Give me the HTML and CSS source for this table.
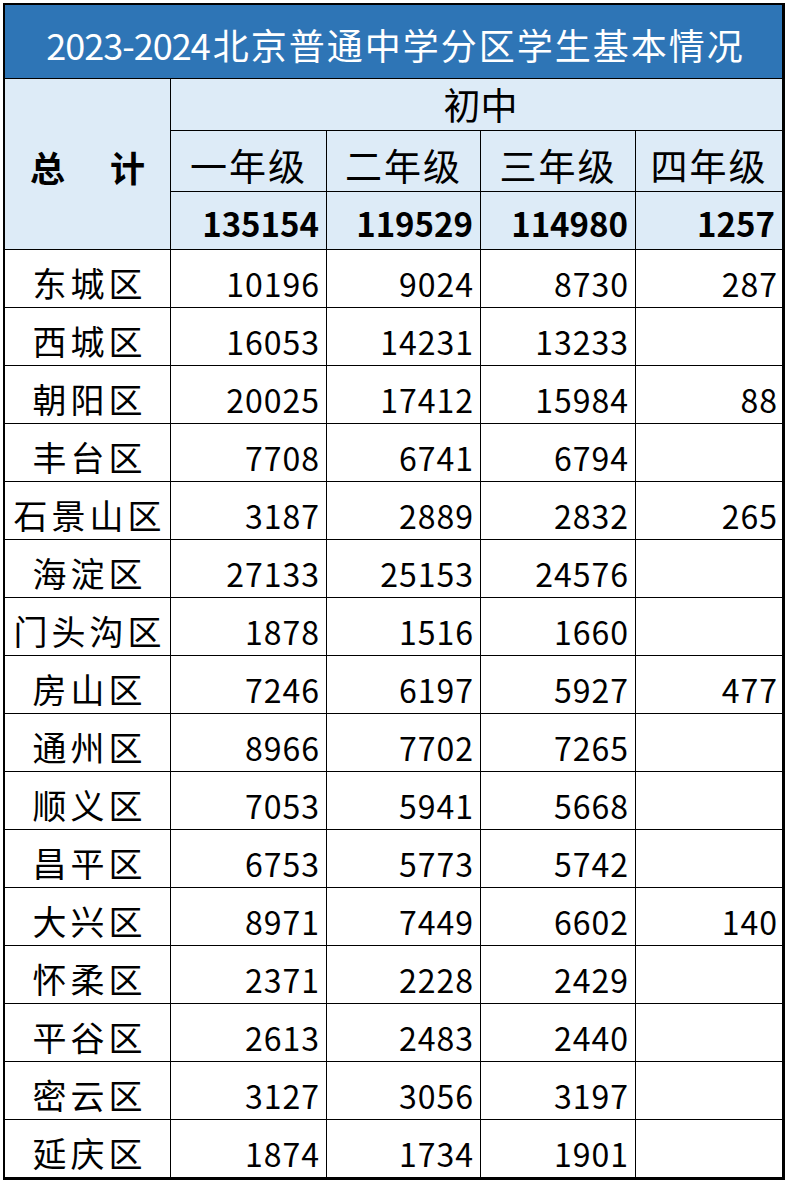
FILE: index.html
```html
<!DOCTYPE html>
<html lang="zh">
<head>
<meta charset="utf-8">
<title>2023-2024北京普通中学分区学生基本情况</title>
<link rel="stylesheet" href="styles.css">
</head>
<body>
<div class="sheet">
  <div class="title"><span class="yr">2023-2024</span><span class="tx">北京普通中学分区学生基本情况</span></div>
  <div class="hd total-label"><span>总</span><span>计</span></div>
  <div class="hd group">初中</div>
  <div class="hd grade">一年级</div>
  <div class="hd grade">二年级</div>
  <div class="hd grade">三年级</div>
  <div class="hd grade">四年级</div>
  <div class="hd sum">135154</div>
  <div class="hd sum">119529</div>
  <div class="hd sum">114980</div>
  <div class="hd sum">1257</div>

  <div class="name">东城区</div><div class="num">10196</div><div class="num">9024</div><div class="num">8730</div><div class="num last">287</div>
  <div class="name">西城区</div><div class="num">16053</div><div class="num">14231</div><div class="num">13233</div><div class="num last"></div>
  <div class="name">朝阳区</div><div class="num">20025</div><div class="num">17412</div><div class="num">15984</div><div class="num last">88</div>
  <div class="name">丰台区</div><div class="num">7708</div><div class="num">6741</div><div class="num">6794</div><div class="num last"></div>
  <div class="name">石景山区</div><div class="num">3187</div><div class="num">2889</div><div class="num">2832</div><div class="num last">265</div>
  <div class="name">海淀区</div><div class="num">27133</div><div class="num">25153</div><div class="num">24576</div><div class="num last"></div>
  <div class="name">门头沟区</div><div class="num">1878</div><div class="num">1516</div><div class="num">1660</div><div class="num last"></div>
  <div class="name">房山区</div><div class="num">7246</div><div class="num">6197</div><div class="num">5927</div><div class="num last">477</div>
  <div class="name">通州区</div><div class="num">8966</div><div class="num">7702</div><div class="num">7265</div><div class="num last"></div>
  <div class="name">顺义区</div><div class="num">7053</div><div class="num">5941</div><div class="num">5668</div><div class="num last"></div>
  <div class="name">昌平区</div><div class="num">6753</div><div class="num">5773</div><div class="num">5742</div><div class="num last"></div>
  <div class="name">大兴区</div><div class="num">8971</div><div class="num">7449</div><div class="num">6602</div><div class="num last">140</div>
  <div class="name">怀柔区</div><div class="num">2371</div><div class="num">2228</div><div class="num">2429</div><div class="num last"></div>
  <div class="name">平谷区</div><div class="num">2613</div><div class="num">2483</div><div class="num">2440</div><div class="num last"></div>
  <div class="name">密云区</div><div class="num">3127</div><div class="num">3056</div><div class="num">3197</div><div class="num last"></div>
  <div class="name">延庆区</div><div class="num">1874</div><div class="num">1734</div><div class="num">1901</div><div class="num last"></div>
</div>
</body>
</html>
```

FILE: styles.css
```css
html, body {
  margin: 0;
  padding: 0;
  background: #ffffff;
}

body {
  padding: 3px 0 0 3px;
  font-family: "Noto Sans CJK SC", "Noto Sans", sans-serif;
  color: #000000;
}

.sheet {
  display: grid;
  grid-template-columns: 165px 155px 153px 154px 146px;
  grid-template-rows: 73px 51px 60px 57px repeat(16, 57px);
  gap: 1px;
  width: 777px;
  background: #000000;
  border-style: solid;
  border-color: #000000;
  border-width: 2px 3px 3px 2px;
}

.sheet > div {
  display: flex;
  align-items: center;
  line-height: 1;
  white-space: nowrap;
}

.title {
  grid-column: 1 / 6;
  background: #2e75b6;
  color: #ffffff;
  justify-content: center;
  padding-top: 4px;
  padding-left: 4px;
}

.title .yr {
  font-size: 36px;
  letter-spacing: -1px;
  margin-right: 3px;
}

.title .tx {
  font-size: 36px;
  letter-spacing: 2px;
}

.hd {
  background: #ddebf7;
}

.total-label {
  grid-column: 1;
  grid-row: 2 / 5;
  justify-content: center;
  gap: 45px;
  font-size: 35px;
  font-weight: 700;
  padding-top: 4px;
}

.group {
  grid-column: 2 / 6;
  justify-content: center;
  font-size: 37px;
  padding-left: 8px;
}

.grade {
  justify-content: center;
  font-size: 37px;
  letter-spacing: 2px;
  padding-top: 8px;
}

.sum {
  justify-content: flex-end;
  font-size: 33px;
  font-weight: 700;
  padding-right: 7px;
  padding-top: 5px;
}

.name {
  background: #ffffff;
  justify-content: center;
  font-size: 34px;
  letter-spacing: 4px;
  padding-left: 4px;
  padding-top: 8px;
}

.num {
  background: #ffffff;
  justify-content: flex-end;
  font-size: 32px;
  letter-spacing: 1px;
  padding-right: 6px;
  padding-top: 9px;
}

.num.last {
  padding-right: 4px;
}
```
